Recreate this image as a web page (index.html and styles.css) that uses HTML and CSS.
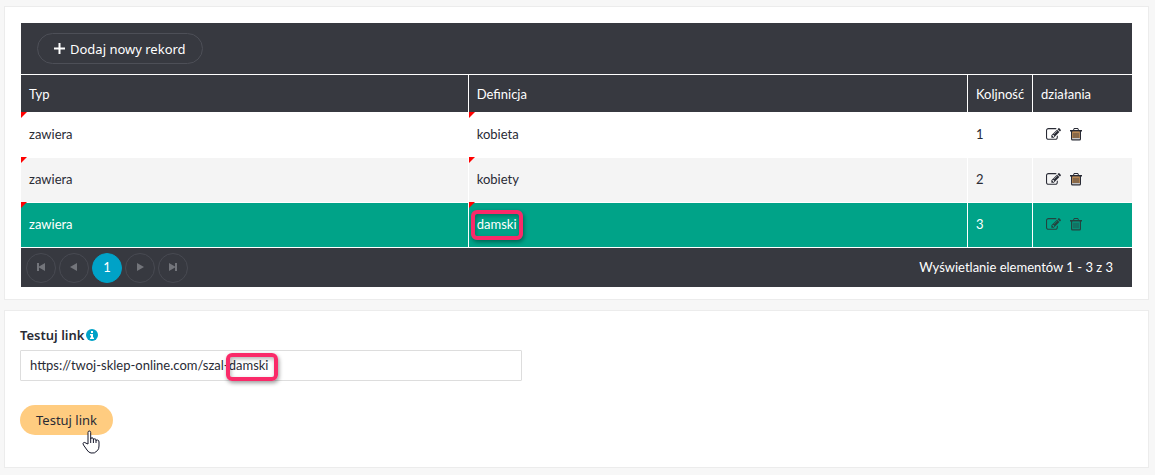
FILE: index.html
```html
<!DOCTYPE html>
<html lang="pl">
<head>
  <meta charset="UTF-8">
  <title>Testuj link</title>
  <meta name="viewport" content="width=device-width, initial-scale=1.0">
  <link rel="stylesheet" href="styles.css">
</head>
<body>
  <svg class="sprite" aria-hidden="true">
    <symbol id="edit" viewBox="0 0 1792 1792">
      <path d="M888 1184l116-116-152-152-116 116v56h96v96h56zm440-720q-16-16-33 1l-350 350q-17 17-1 33t33-1l350-350q17-17 1-33zm80 594v190q0 119-84.500 203.500t-203.500 84.500h-832q-119 0-203.500-84.500t-84.500-203.500v-832q0-119 84.500-203.500t203.500-84.500h832q63 0 117 25 15 7 18 23 3 17-9 29l-49 49q-14 14-32 8-23-6-45-6h-832q-66 0-113 47t-47 113v832q0 66 47 113t113 47h832q66 0 113-47t47-113v-126q0-13 9-22l64-64q15-15 35-7t20 29zm-96-738l288 288-672 672h-288v-288zm444 132l-92 92-288-288 92-92q28-28 68-28t68 28l152 152q28 28 28 68t-28 68z"/>
    </symbol>
    <symbol id="trash" viewBox="0 0 12 13">
      <path fill-rule="evenodd" d="M4 0h4l1 2h3v1.500h-1V11q0 1.500-1.500 1.500h-7Q1 12.500 1 11V3.500H0V2h3zM4.500 1L4 2h4l-.5-1zM2.300 3.500v7.800h7.400V3.500zM3.500 4.500h1v6h-1zM5.500 4.500h1v6h-1zM7.500 4.500h1v6h-1z"/>
    </symbol>
  </svg>

  <section class="card">
    <div class="grid">
      <div class="toolbar">
        <button class="add-button" type="button">
          <svg width="11" height="11" viewBox="0 0 11 11" aria-hidden="true"><path d="M5.500 0v11M0 5.500h11" stroke="currentColor" stroke-width="2"/></svg>
          Dodaj nowy rekord
        </button>
      </div>
      <table>
        <colgroup>
          <col class="col-type">
          <col>
          <col class="col-order">
          <col class="col-actions">
        </colgroup>
        <thead>
          <tr>
            <th>Typ</th>
            <th>Definicja</th>
            <th>Koljność</th>
            <th>działania</th>
          </tr>
        </thead>
        <tbody>
          <tr>
            <td class="dirty">zawiera</td>
            <td class="dirty">kobieta</td>
            <td>1</td>
            <td>
              <div class="actions">
                <button type="button" aria-label="Edytuj"><svg class="icon-edit"><use href="#edit"/></svg></button>
                <button type="button" aria-label="Usuń"><svg class="icon-trash"><use href="#trash"/></svg></button>
              </div>
            </td>
          </tr>
          <tr>
            <td class="dirty">zawiera</td>
            <td class="dirty">kobiety</td>
            <td>2</td>
            <td>
              <div class="actions">
                <button type="button" aria-label="Edytuj"><svg class="icon-edit"><use href="#edit"/></svg></button>
                <button type="button" aria-label="Usuń"><svg class="icon-trash"><use href="#trash"/></svg></button>
              </div>
            </td>
          </tr>
          <tr class="selected">
            <td class="dirty">zawiera</td>
            <td class="dirty"><span class="marked">damski</span></td>
            <td>3</td>
            <td>
              <div class="actions">
                <button type="button" aria-label="Edytuj"><svg class="icon-edit"><use href="#edit"/></svg></button>
                <button type="button" aria-label="Usuń"><svg class="icon-trash"><use href="#trash"/></svg></button>
              </div>
            </td>
          </tr>
        </tbody>
      </table>
      <div class="pager">
        <nav class="pages">
          <button type="button" aria-label="Pierwsza strona" disabled><svg viewBox="0 0 10 10"><path d="M1 1h2v3.500L9 1v8L3 5.500V9H1z"/></svg></button>
          <button type="button" aria-label="Poprzednia strona" disabled><svg viewBox="0 0 10 10"><path d="M8 1v8L1 5z"/></svg></button>
          <button class="current" type="button">1</button>
          <button type="button" aria-label="Następna strona" disabled><svg viewBox="0 0 10 10"><path d="M2 1v8l7-4z"/></svg></button>
          <button type="button" aria-label="Ostatnia strona" disabled><svg viewBox="0 0 10 10"><path d="M9 1H7v3.500L1 1v8l6-3.500V9h2z"/></svg></button>
        </nav>
        <span class="pager-info">Wyświetlanie elementów 1 - 3 z 3</span>
      </div>
    </div>
  </section>

  <section class="card test-card">
    <div class="label-row">
      <label for="testLink">Testuj link</label>
      <svg class="info" viewBox="0 0 12 12" aria-hidden="true">
        <circle cx="6" cy="6" r="6"/>
        <path d="M5 2h2v2H5zM4 5h3v3.500h1V10H4V8.500h1v-2H4z" fill="#fff"/>
      </svg>
    </div>
    <div class="link-field">
      <input type="text" id="testLink" value="https://twoj-sklep-online.com/szal-damski">
      <span class="highlight"></span>
    </div>
    <div class="submit">
      <button class="test-button" type="button">Testuj link</button>
      <svg class="cursor" viewBox="0 0 18 24" aria-hidden="true">
        <path d="M6 14V2.500Q6 1 7.300 1T8.700 2.500V9q0-1.200 1.300-1.200T11.400 9v1q0-1.200 1.300-1.200T14 10v1q0-1.200 1.500-1 1.500.2 1.500 2v4q0 3-1.500 4.500-3 3.500-6.500 2.500-2.500-.5-4-3L1.500 15q-1-1.500 0-2.300 1.200-.8 2.500.5zM8.700 9v4M11.400 10v3M14 11v2"/>
      </svg>
    </div>
  </section>
</body>
</html>
```
FILE: styles.css
```css
* {
  box-sizing: border-box;
}
body {
  margin: 0;
  padding: 6px 6px 6px 4px;
  background: #f7f7f7;
  color: #292b35;
  font-family: Lato, "Noto Sans", sans-serif;
  font-size: 13px;
  line-height: 20px;
}
button, input {
  font: inherit;
  color: inherit;
}
button {
  padding: 0;
  border: none;
  background: none;
  cursor: pointer;
}
svg {
  display: block;
  fill: currentColor;
}
.sprite {
  display: none;
}
.card {
  margin-bottom: 10px;
  padding: 16px 16px 12px;
  background: #fff;
  border: 1px solid #ececec;
}
.grid {
  color: #fff;
}
.toolbar {
  padding: 10px 16px;
  background: #373940;
}
.add-button, .test-button, label {
  font-family: "Noto Sans", sans-serif;
}
.add-button {
  display: flex;
  align-items: center;
  gap: 5px;
  height: 31px;
  padding: 0 16px;
  border: 1px solid #4d4f57;
  border-radius: 16px;
}
table {
  width: 100%;
  table-layout: fixed;
  border-collapse: separate;
  border-spacing: 0;
}
.col-type {
  width: 40.3%;
}
.col-order {
  width: 65px;
}
.col-actions {
  width: 99px;
}
th, td {
  padding: 0 8px;
  border-top: 1px solid #fff;
  border-right: 1px solid #fff;
  text-align: left;
  font-weight: 400;
  white-space: nowrap;
}
th:last-child, td:last-child {
  border-right: none;
}
th {
  height: 38px;
  background: #373940;
}
td {
  position: relative;
  height: 45px;
  padding-bottom: 2px;
  background: #fff;
  color: #292b35;
}
tr:nth-child(2) td {
  background: #f4f4f4;
}
.selected td {
  background: #00a388;
  color: #fff;
}
.dirty::before {
  content: "";
  position: absolute;
  top: -1px;
  left: 0;
  border-top: 6px solid #f00;
  border-right: 6px solid transparent;
}
.actions {
  display: flex;
  align-items: center;
  gap: 9px;
  padding-left: 5px;
}
.actions button {
  color: #292b35;
}
.icon-edit {
  width: 15px;
  height: 15px;
}
.icon-trash {
  width: 12px;
  height: 13px;
  background: linear-gradient(#e8a860, #e8a860) 50% 60% / 8px 7px no-repeat;
}
.selected .actions button {
  color: #24433f;
}
.selected .icon-trash {
  background: none;
}
.marked {
  position: relative;
}
.marked::after, .highlight {
  position: absolute;
  border: 4px solid #fa2a69;
  border-radius: 6px;
  box-shadow: 1px 2px 4px rgba(0, 0, 0, 0.4), inset 1px 2px 4px rgba(0, 0, 0, 0.3);
}
.marked::after {
  content: "";
  inset: -6px -6px -8px;
}
.pager {
  display: flex;
  align-items: center;
  justify-content: space-between;
  height: 40px;
  padding: 0 19px 0 5px;
  border-top: 1px solid #fff;
  background: #373940;
}
.pager-info {
  padding-bottom: 2px;
}
.pages {
  display: flex;
  gap: 3px;
}
.pages button {
  display: flex;
  align-items: center;
  justify-content: center;
  width: 30px;
  height: 30px;
  padding-bottom: 2px;
  border: 1px solid #484a52;
  border-radius: 50%;
  color: #73757b;
}
.pages svg {
  width: 10px;
  height: 10px;
}
.pages .current {
  border-color: #00a2c7;
  background: #00a2c7;
  color: #fff;
}
.test-card {
  margin-bottom: 0;
  padding: 14px 15px 32px;
}
.label-row {
  display: flex;
  align-items: center;
  gap: 2px;
  margin-bottom: 5px;
}
label {
  font-weight: 600;
}
.info {
  width: 12px;
  height: 12px;
  color: #00a2c7;
}
.link-field {
  position: relative;
  max-width: 502px;
}
.link-field input {
  display: block;
  width: 100%;
  height: 31px;
  padding: 0 9px 1px;
  border: 1px solid #ddd;
  border-radius: 1px;
  background: #fff;
}
.highlight {
  top: 3px;
  left: 206px;
  width: 52px;
  height: 28px;
}
.submit {
  position: relative;
  margin-top: 24px;
}
.test-button {
  display: block;
  height: 30px;
  padding: 0 16px;
  border-radius: 15px;
  background: #ffcc80;
}
.cursor {
  position: absolute;
  top: 25px;
  left: 62px;
  width: 18px;
  height: 24px;
  fill: #fff;
  stroke: #15172a;
  stroke-width: 1;
}
```
